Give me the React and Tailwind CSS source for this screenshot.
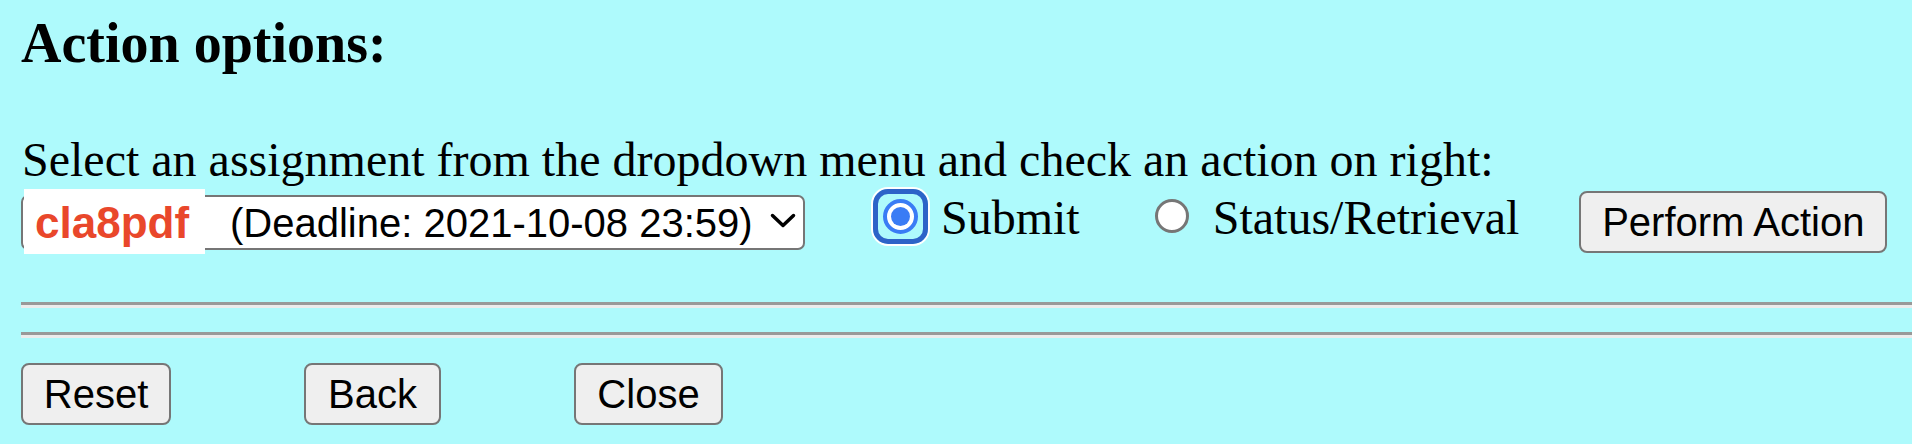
import React, { useState } from 'react';

const serif = { fontFamily: '"Liberation Serif", "Times New Roman", serif' };

const Btn = ({ label, w }) => (
  <button
    type="button"
    className={`${w} h-[62px] shrink-0 flex items-center justify-center rounded-[8px] border-2 border-[#767676] bg-[#efefef] text-[40px] leading-none text-black font-['Liberation_Sans',Arial,sans-serif]`}
  >
    {label}
  </button>
);

const App = () => {
  const [action, setAction] = useState('submit');

  return (
    <div className="h-screen w-full overflow-hidden bg-[#aefafc] text-black" style={serif}>
      <h3 className="mt-[12px] pl-[21px] text-[56px] leading-[62px] font-bold whitespace-nowrap">
        Action options:
      </h3>

      <p className="mt-[59px] pl-[22px] text-[48px] leading-[53px] whitespace-nowrap">
        Select an assignment from the dropdown menu and check an action on right:
      </p>

      {/* assignment + radios + action button */}
      <div className="mt-[3px] pl-[21px] flex items-start whitespace-nowrap">
        <div className="relative mt-[6px] w-[784px] h-[55px] shrink-0 flex items-center pl-[207px] rounded-[7px] border-2 border-[#767676] bg-white text-[40px] leading-none font-['Liberation_Sans',Arial,sans-serif]">
          <span>(Deadline: 2021-10-08 23:59)</span>
          <svg className="ml-[17px] mb-[4px]" width="26" height="15" viewBox="0 0 26 15" fill="none">
            <path d="M2.5 2.5 L13 12.5 L23.5 2.5" stroke="#000" strokeWidth="3.5" strokeLinecap="round" strokeLinejoin="round" />
          </svg>
          {/* highlighted assignment name */}
          <div className="absolute left-[1px] top-[-8px] w-[181px] h-[65px] bg-white pl-[11px] pt-[12px] text-[44px] leading-none font-bold text-[#e9472b]">
            cla8pdf
          </div>
        </div>

        <button
          type="button"
          onClick={() => setAction('submit')}
          className="ml-[68px] w-[55px] h-[55px] shrink-0 flex items-center justify-center rounded-[15px] border-[5px] border-[#2d63c8] shadow-[0_0_0_2px_#ffffff]"
        >
          <span className="w-[35px] h-[35px] rounded-full border-[4px] border-[#3a7cf5] bg-white flex items-center justify-center">
            {action === 'submit' && <span className="w-[19px] h-[19px] rounded-full bg-[#3a7cf5]" />}
          </span>
        </button>
        <span className="ml-[13px] mt-[2px] text-[48px] leading-[53px]">Submit</span>

        <button
          type="button"
          onClick={() => setAction('status')}
          className="ml-[75px] mt-[10px] w-[34px] h-[34px] shrink-0 rounded-full border-[3px] border-[#767676] bg-white flex items-center justify-center"
        >
          {action === 'status' && <span className="w-[18px] h-[18px] rounded-full bg-[#3a7cf5]" />}
        </button>
        <span className="ml-[24px] mt-[2px] text-[48px] leading-[53px]">Status/Retrieval</span>

        <div className="ml-[60px] mt-[2px]">
          <Btn label="Perform Action" w="w-[308px]" />
        </div>
      </div>

      <hr className="mt-[49px] ml-[21px] h-0 border-0 border-t-[3px] border-t-[#999999] border-b-[3px] border-b-[#ececec]" />
      <hr className="mt-[24px] ml-[21px] h-0 border-0 border-t-[3px] border-t-[#999999] border-b-[3px] border-b-[#ececec]" />

      <div className="mt-[25px] pl-[21px] flex gap-[133px]">
        <Btn label="Reset" w="w-[150px]" />
        <Btn label="Back" w="w-[137px]" />
        <Btn label="Close" w="w-[149px]" />
      </div>
    </div>
  );
};

export default App;
